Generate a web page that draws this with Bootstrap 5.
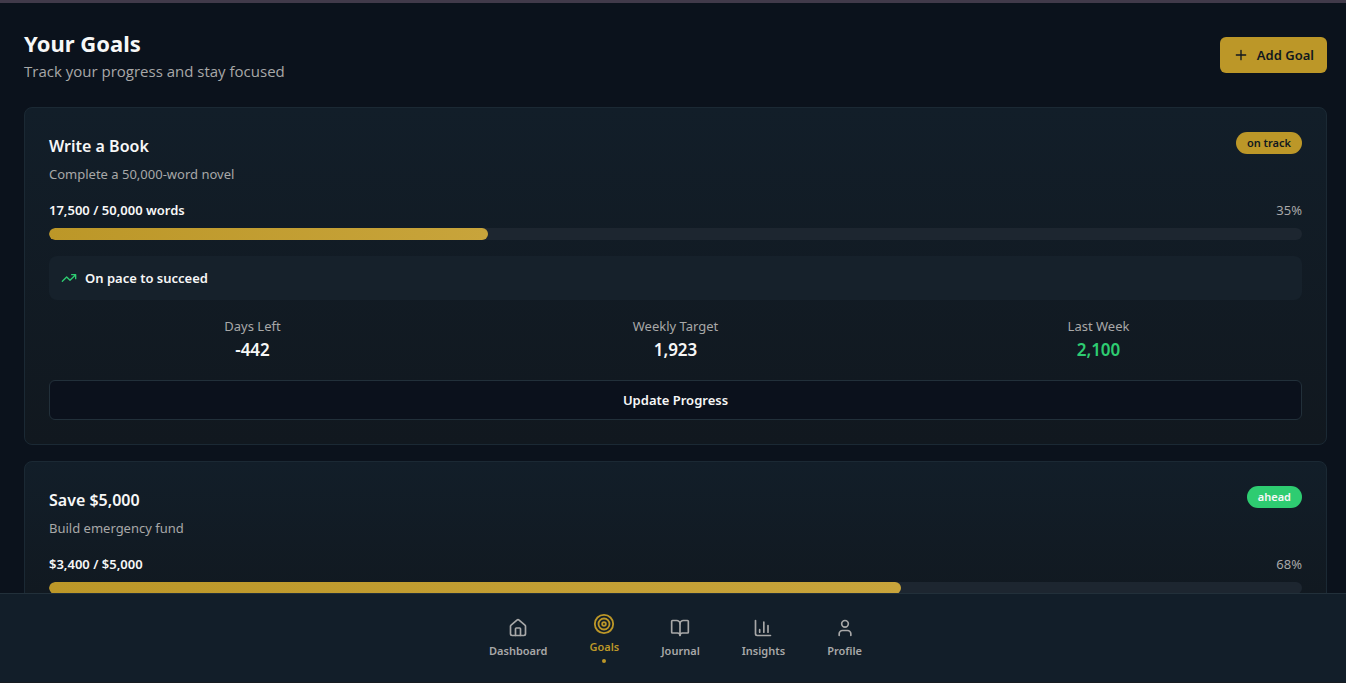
<!DOCTYPE html>
<html lang="en">
<head>
<meta charset="utf-8">
<meta name="viewport" content="width=device-width, initial-scale=1">
<title>Your Goals</title>
<link rel="stylesheet" href="https://cdn.jsdelivr.net/npm/bootstrap@5.3.0/dist/css/bootstrap.min.css">
<style>
  :root { --gold: #bc9728; --green: #2ecc71; --ink: #f7f7f7; --soft: #a8a8a8; }
  body { background: #0b121c; color: var(--ink); font-family: "Noto Sans", "Open Sans", sans-serif; font-size: 13px; line-height: 20px; border-top: 3px solid #413a4a; }
  svg { fill: none; stroke: currentColor; stroke-width: 2; stroke-linecap: round; stroke-linejoin: round; }
  .page-main { padding: 24px 19px 0 24px; }
  .page-title { font-size: 22px; line-height: 32px; font-weight: 700; }
  .page-sub { font-family: "Open Sans", sans-serif; font-size: 15px; line-height: 24px; }
  .soft { color: var(--soft); }
  .good { color: var(--green); }
  .btn-gold { --bs-btn-bg: var(--gold); --bs-btn-color: #10171f; --bs-btn-hover-bg: #cba83c; --bs-btn-hover-color: #10171f; --bs-btn-border-width: 0; --bs-btn-border-radius: 6px; font-size: 13px; line-height: 20px; padding: 8px 13px; font-weight: 600; }
  .goal-card { --bs-card-bg: transparent; --bs-card-color: var(--ink); --bs-card-border-color: #1b2934; --bs-card-border-radius: 8px; --bs-card-inner-border-radius: 7px; --bs-card-spacer-y: 24px; --bs-card-spacer-x: 24px; background: linear-gradient(180deg, #121e29, #11181f); }
  .goal-title { font-size: 16px; line-height: 28px; font-weight: 600; }
  .pill { font-size: 11px; line-height: 16px; font-weight: 600; padding: 3px 11px; background: var(--gold); color: #10171f; }
  .pill-good { background: var(--green); color: var(--ink); }
  .goal-progress { --bs-progress-height: 12px; --bs-progress-bg: #1d2630; --bs-progress-border-radius: 6px; }
  .goal-progress .progress-bar { background: linear-gradient(90deg, #bc9728, #c8a43b); border-radius: 6px; }
  .pace { background: #16212b; border-radius: 8px; padding: 12px; }
  .stat-value { font-size: 17px; line-height: 28px; font-weight: 600; }
  .btn-night { --bs-btn-bg: #0b111c; --bs-btn-color: var(--ink); --bs-btn-border-color: #22303a; --bs-btn-hover-bg: #131e29; --bs-btn-hover-color: var(--ink); --bs-btn-border-radius: 6px; font-size: 13px; line-height: 20px; padding: 9px 16px; font-weight: 600; }
  .tab-bar { background: #121e29; border-top: 1px solid #22303a; border-bottom: 1px solid #161b20; padding: 19px 19px 19px 24px; height: 90px; gap: 42px; }
  .tab-bar a { color: var(--soft); font-size: 11px; line-height: 16px; font-weight: 600; text-decoration: none; padding-top: 5px; gap: 5px; }
  .tab-bar a.active { color: var(--gold); padding: 0; gap: 4px; }
  .dot { width: 4px; height: 4px; background: currentColor; }
</style>
</head>
<body class="vh-100 overflow-hidden d-flex flex-column">
<main class="page-main flex-fill overflow-hidden">
  <header class="d-flex justify-content-between align-items-center mb-4">
    <div>
      <h1 class="page-title mb-0">Your Goals</h1>
      <p class="page-sub soft mb-0">Track your progress and stay focused</p>
    </div>
    <button type="button" class="btn btn-gold d-flex align-items-center gap-2">
      <svg width="16" height="16" viewBox="0 0 24 24" aria-hidden="true"><path d="M5 12h14M12 5v14"/></svg>
      Add Goal
    </button>
  </header>

  <section class="card goal-card mb-3">
    <div class="card-body d-flex flex-column gap-3">
      <div class="d-flex justify-content-between align-items-start">
        <div>
          <h2 class="goal-title mb-1">Write a Book</h2>
          <p class="soft mb-0">Complete a 50,000-word novel</p>
        </div>
        <span class="pill rounded-pill">on track</span>
      </div>
      <div>
        <div class="d-flex justify-content-between mb-2">
          <span class="fw-semibold">17,500 / 50,000 words</span>
          <span class="soft">35%</span>
        </div>
        <div class="progress goal-progress" role="progressbar" aria-label="Write a Book" aria-valuenow="35" aria-valuemin="0" aria-valuemax="100">
          <div class="progress-bar" style="width: 35%"></div>
        </div>
      </div>
      <div class="pace d-flex align-items-center gap-2">
        <svg class="good" width="16" height="16" viewBox="0 0 24 24" aria-hidden="true"><path d="M22 7l-8.500 8.500-5-5L2 17M16 7h6v6"/></svg>
        <span class="fw-semibold">On pace to succeed</span>
      </div>
      <div class="row gx-3 text-center">
        <div class="col"><div class="soft">Days Left</div><div class="stat-value">-442</div></div>
        <div class="col"><div class="soft">Weekly Target</div><div class="stat-value">1,923</div></div>
        <div class="col"><div class="soft">Last Week</div><div class="stat-value good">2,100</div></div>
      </div>
      <button type="button" class="btn btn-night w-100">Update Progress</button>
    </div>
  </section>

  <section class="card goal-card">
    <div class="card-body d-flex flex-column gap-3">
      <div class="d-flex justify-content-between align-items-start">
        <div>
          <h2 class="goal-title mb-1">Save $5,000</h2>
          <p class="soft mb-0">Build emergency fund</p>
        </div>
        <span class="pill pill-good rounded-pill">ahead</span>
      </div>
      <div>
        <div class="d-flex justify-content-between mb-2">
          <span class="fw-semibold">$3,400 / $5,000</span>
          <span class="soft">68%</span>
        </div>
        <div class="progress goal-progress" role="progressbar" aria-label="Save $5,000" aria-valuenow="68" aria-valuemin="0" aria-valuemax="100">
          <div class="progress-bar" style="width: 68%"></div>
        </div>
      </div>
    </div>
  </section>
</main>

<nav class="tab-bar d-flex justify-content-center align-items-start flex-shrink-0" aria-label="Main">
  <a href="#dashboard" class="d-flex flex-column align-items-center">
    <svg width="20" height="20" viewBox="0 0 24 24" aria-hidden="true"><path d="M15 21v-8a1 1 0 0 0-1-1h-4a1 1 0 0 0-1 1v8"/><path d="M3 10a2 2 0 0 1 .709-1.528l7-5.999a2 2 0 0 1 2.582 0l7 5.999A2 2 0 0 1 21 10v9a2 2 0 0 1-2 2H5a2 2 0 0 1-2-2z"/></svg>
    Dashboard
  </a>
  <a href="#goals" class="active d-flex flex-column align-items-center" aria-current="page">
    <svg width="22" height="22" viewBox="0 0 24 24" aria-hidden="true"><circle cx="12" cy="12" r="10"/><circle cx="12" cy="12" r="6"/><circle cx="12" cy="12" r="2"/></svg>
    Goals
    <span class="dot rounded-circle"></span>
  </a>
  <a href="#journal" class="d-flex flex-column align-items-center">
    <svg width="20" height="20" viewBox="0 0 24 24" aria-hidden="true"><path d="M12 7v14"/><path d="M3 18a1 1 0 0 1-1-1V4a1 1 0 0 1 1-1h5a4 4 0 0 1 4 4 4 4 0 0 1 4-4h5a1 1 0 0 1 1 1v13a1 1 0 0 1-1 1h-6a3 3 0 0 0-3 3 3 3 0 0 0-3-3z"/></svg>
    Journal
  </a>
  <a href="#insights" class="d-flex flex-column align-items-center">
    <svg width="20" height="20" viewBox="0 0 24 24" aria-hidden="true"><path d="M3 3v16a2 2 0 0 0 2 2h16M18 17V9M13 17V5M8 17v-3"/></svg>
    Insights
  </a>
  <a href="#profile" class="d-flex flex-column align-items-center">
    <svg width="20" height="20" viewBox="0 0 24 24" aria-hidden="true"><path d="M19 21v-2a4 4 0 0 0-4-4H9a4 4 0 0 0-4 4v2"/><circle cx="12" cy="7" r="4"/></svg>
    Profile
  </a>
</nav>
<script src="https://cdn.jsdelivr.net/npm/bootstrap@5.3.0/dist/js/bootstrap.bundle.min.js"></script>
</body>
</html>
